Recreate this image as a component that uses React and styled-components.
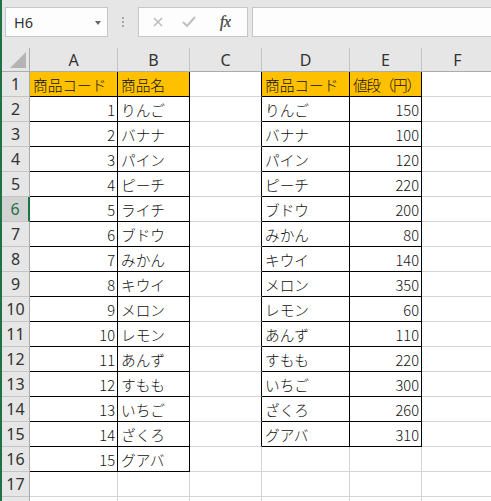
import React from "react";
import styled, { createGlobalStyle } from "styled-components";

const GlobalStyle = createGlobalStyle`
  html, body { margin: 0; padding: 0; background: #e6e6e6; overflow: hidden; }
  #root { width: 491px; height: 501px; }
`;

const GREEN = "#1f7246";
const GRID = "#d4d4d4";

const Window = styled.div`
  width: 491px;
  height: 501px;
  box-sizing: border-box;
  border-left: 2px solid ${GREEN};
  background: #e6e6e6;
  display: flex;
  flex-direction: column;
  overflow: hidden;
  font-family: "Noto Sans", "Noto Sans CJK JP", sans-serif;
`;

const FormulaBar = styled.div`
  height: 48px;
  flex: none;
  box-sizing: border-box;
  padding: 7px 0 0 3px;
  display: flex;
  align-items: flex-start;
`;

const NameBox = styled.div`
  width: 103px;
  height: 30px;
  box-sizing: border-box;
  border: 1px solid #c6c6c6;
  background: #fdfdfd;
  display: flex;
  align-items: center;
  justify-content: space-between;
  padding: 0 6px 0 8px;
  font-size: 14.5px;
  color: #333;
`;

const Caret = styled.span`
  width: 0;
  height: 0;
  border-left: 3.5px solid transparent;
  border-right: 3.5px solid transparent;
  border-top: 4px solid #666;
  margin-top: 1px;
`;

const Grip = styled.div`
  width: 30px;
  height: 30px;
  display: flex;
  flex-direction: column;
  align-items: center;
  justify-content: center;
  gap: 2px;
`;

const GripDot = styled.span`
  width: 2px;
  height: 2px;
  background: #a8a8a8;
`;

const FxBox = styled.div`
  width: 110px;
  height: 30px;
  box-sizing: border-box;
  border: 1px solid #c6c6c6;
  background: #fdfdfd;
  display: flex;
  align-items: center;
  padding: 0 0 0 14px;
`;

const FxButton = styled.span`
  width: ${(p) => p.$w}px;
  display: flex;
  align-items: center;
  justify-content: center;
`;

const FxLabel = styled.span`
  font-family: "Liberation Serif", "DejaVu Serif", serif;
  font-style: italic;
  font-size: 16px;
  color: #555;
  letter-spacing: -0.5px;
  text-shadow: 0.3px 0 0 #555;
`;

const FormulaInput = styled.div`
  flex: 1;
  height: 30px;
  margin-left: 4px;
  box-sizing: border-box;
  border: 1px solid #c6c6c6;
  border-right: none;
  background: #fdfdfd;
`;

const Sheet = styled.div`
  display: grid;
  grid-template-columns: 28px 88px 72px 72px 88px 72px 72px;
  grid-template-rows: 24px;
  grid-auto-rows: 25px;
  background: #ffffff;
`;

const Corner = styled.div`
  background: #e6e6e6;
  border-right: 1px solid #ababab;
  border-bottom: 1px solid #ababab;
  position: relative;
  box-sizing: border-box;
`;

const CornerTriangle = styled.span`
  position: absolute;
  right: 3px;
  bottom: 3px;
  width: 0;
  height: 0;
  border-left: 16px solid transparent;
  border-bottom: 16px solid #b4b4b4;
`;

const ColHeader = styled.div`
  background: #e6e6e6;
  box-sizing: border-box;
  border-right: 1px solid #c4c4c4;
  border-bottom: 1px solid #ababab;
  display: flex;
  align-items: center;
  justify-content: center;
  font-size: 16px;
  color: #333;
  padding-top: 1px;
`;

const RowHeader = styled.div`
  box-sizing: border-box;
  background: ${(p) => (p.$selected ? "#d2d2d2" : "#e6e6e6")};
  color: ${(p) => (p.$selected ? GREEN : "#333")};
  border-bottom: 1px solid #c4c4c4;
  border-right: ${(p) => (p.$selected ? `2px solid ${GREEN}` : "1px solid #ababab")};
  display: flex;
  align-items: center;
  justify-content: center;
  font-size: 16px;
`;

const Cell = styled.div`
  box-sizing: border-box;
  background: ${(p) => (p.$fill ? "#ffc000" : "#ffffff")};
  border-right: 1px solid ${(p) => (p.$rightBlack ? "#000" : GRID)};
  border-bottom: 1px solid ${(p) => (p.$bottomBlack ? "#000" : GRID)};
  display: flex;
  align-items: center;
  justify-content: ${(p) => (p.$num ? "flex-end" : "flex-start")};
  padding: 0 2px 0 3px;
  font-family: "Noto Sans CJK JP", sans-serif;
  font-weight: 300;
  font-size: 14.67px;
  letter-spacing: ${(p) => (p.$tight ? "-1.3px" : "0")};
  color: #111;
  white-space: nowrap;
  overflow: visible;
`;

const names = ["りんご", "バナナ", "パイン", "ピーチ", "ライチ", "ブドウ", "みかん", "キウイ", "メロン", "レモン", "あんず", "すもも", "いちご", "ざくろ", "グアバ"];
const prices = [
  ["りんご", 150], ["バナナ", 100], ["パイン", 120], ["ピーチ", 220], ["ブドウ", 200],
  ["みかん", 80], ["キウイ", 140], ["メロン", 350], ["レモン", 60], ["あんず", 110],
  ["すもも", 220], ["いちご", 300], ["ざくろ", 260], ["グアバ", 310],
];

const COLS = ["A", "B", "C", "D", "E", "F"];
const ROWS = 18;

function inTable(r, c) {
  if (r >= 1 && r <= 16 && (c === 0 || c === 1)) return true;
  if (r >= 1 && r <= 15 && (c === 3 || c === 4)) return true;
  return false;
}

function cellValue(r, c) {
  if (r === 1) {
    return ["商品コード", "商品名", "", "商品コード", "値段（円）", ""][c];
  }
  if (c === 0 && r <= 16) return { v: r - 1, num: true };
  if (c === 1 && r <= 16) return names[r - 2];
  if (c === 3 && r <= 15) return prices[r - 2][0];
  if (c === 4 && r <= 15) return { v: prices[r - 2][1], num: true };
  return "";
}

export default function App() {
  const rows = [];
  for (let r = 1; r <= ROWS; r++) {
    rows.push(
      <RowHeader key={`h${r}`} $selected={r === 6}>{r}</RowHeader>
    );
    COLS.forEach((_, c) => {
      const val = cellValue(r, c);
      const isNum = typeof val === "object";
      rows.push(
        <Cell
          key={`${r}-${c}`}
          $fill={r === 1 && inTable(r, c)}
          $rightBlack={inTable(r, c) || inTable(r, c + 1)}
          $bottomBlack={inTable(r, c) || inTable(r + 1, c)}
          $num={isNum}
          $tight={r === 1 && c === 4}
        >
          {isNum ? val.v : val}
        </Cell>
      );
    });
  }

  return (
    <>
      <GlobalStyle />
      <Window>
        <FormulaBar>
          <NameBox>
            <span>H6</span>
            <Caret />
          </NameBox>
          <Grip>
            <GripDot />
            <GripDot />
            <GripDot />
          </Grip>
          <FxBox>
            <FxButton $w={10}>
              <svg width="10" height="10" viewBox="0 0 10 10">
                <path d="M1 1 L9 9 M9 1 L1 9" stroke="#b8b8b8" strokeWidth="1.4" fill="none" />
              </svg>
            </FxButton>
            <FxButton $w={52}>
              <svg width="14" height="12" viewBox="0 0 14 12">
                <path d="M1 6 L5 10 L13 1" stroke="#c0c0c0" strokeWidth="2" fill="none" />
              </svg>
            </FxButton>
            <FxButton $w={20}>
              <FxLabel>fx</FxLabel>
            </FxButton>
          </FxBox>
          <FormulaInput />
        </FormulaBar>
        <Sheet>
          <Corner>
            <CornerTriangle />
          </Corner>
          {COLS.map((c) => (
            <ColHeader key={c}>{c}</ColHeader>
          ))}
          {rows}
        </Sheet>
      </Window>
    </>
  );
}
